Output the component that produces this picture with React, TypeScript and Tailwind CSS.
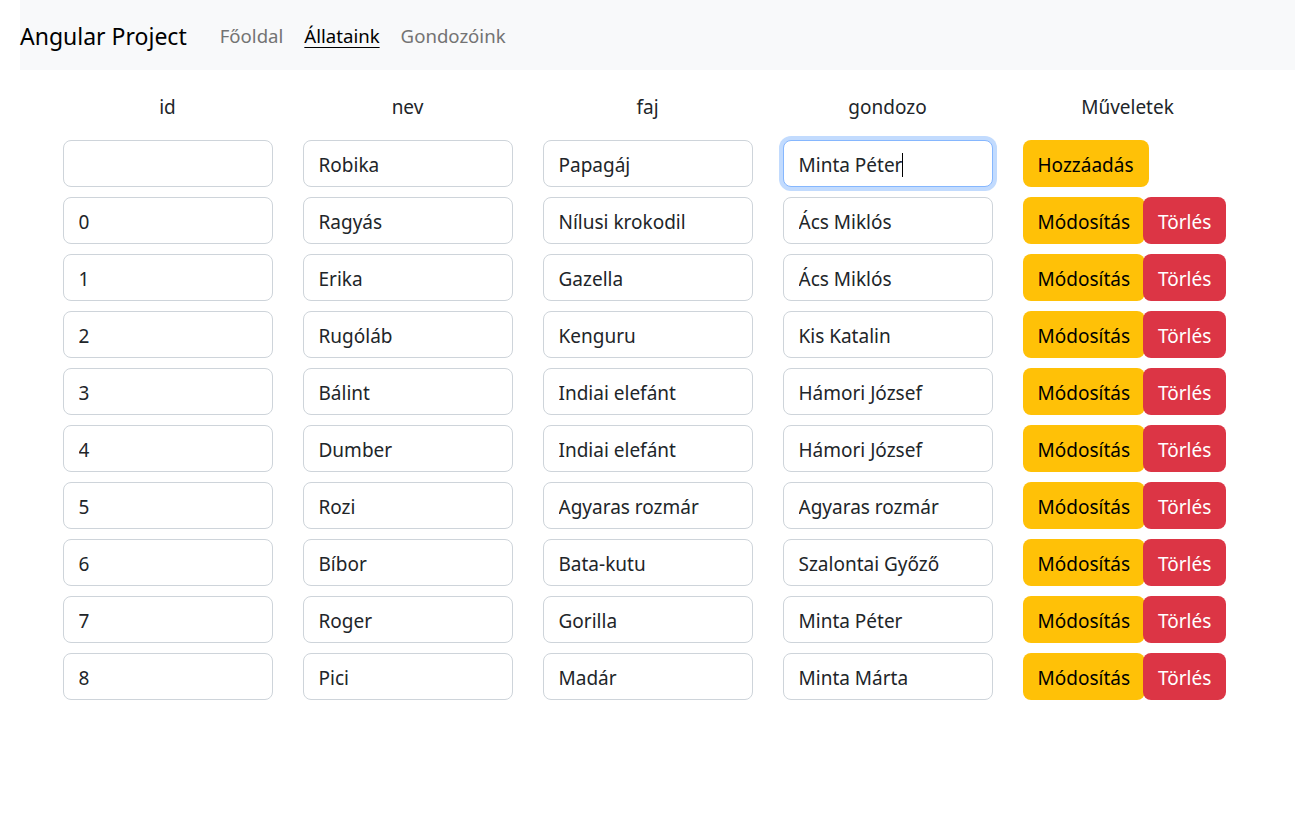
import React from 'react';

type Animal = { id: string; nev: string; faj: string; gondozo: string };

const animals: Animal[] = [
  { id: '0', nev: 'Ragyás', faj: 'Nílusi krokodil', gondozo: 'Ács Miklós' },
  { id: '1', nev: 'Erika', faj: 'Gazella', gondozo: 'Ács Miklós' },
  { id: '2', nev: 'Rugóláb', faj: 'Kenguru', gondozo: 'Kis Katalin' },
  { id: '3', nev: 'Bálint', faj: 'Indiai elefánt', gondozo: 'Hámori József' },
  { id: '4', nev: 'Dumber', faj: 'Indiai elefánt', gondozo: 'Hámori József' },
  { id: '5', nev: 'Rozi', faj: 'Agyaras rozmár', gondozo: 'Agyaras rozmár' },
  { id: '6', nev: 'Bíbor', faj: 'Bata-kutu', gondozo: 'Szalontai Győző' },
  { id: '7', nev: 'Roger', faj: 'Gorilla', gondozo: 'Minta Péter' },
  { id: '8', nev: 'Pici', faj: 'Madár', gondozo: 'Minta Márta' },
];

const inputCls =
  'w-full h-[47px] px-[15px] pt-[3px] rounded-[8px] border border-[#ced4da] bg-white text-[19px] text-[#212529] outline-none';

const btnCls = 'h-[47px] px-[15px] pt-[3px] rounded-[8px] text-[19px]';

const Field = ({ value }: { value: string }) => (
  <div className="px-[15px]">
    <input readOnly value={value} className={inputCls} />
  </div>
);

export default function App() {
  return (
    <div className="min-h-screen bg-white font-['Segoe_UI','Noto_Sans',sans-serif] text-[#212529]">
      {/* Navbar */}
      <nav className="ml-[20px] h-[70px] pt-[2px] bg-[#f8f9fa] flex items-center">
        <span className="text-[23px] text-black leading-none mr-[33px]">Angular Project</span>
        <div className="flex items-center gap-[21px] text-[18.6px] leading-none">
          <a className="text-[#737373]">Főoldal</a>
          <a className="text-black underline underline-offset-[4px]">Állataink</a>
          <a className="text-[#737373]">Gondozóink</a>
        </div>
      </nav>

      {/* Table */}
      <div className="w-[1200px] mx-auto pt-[12px]">
        <div className="grid grid-cols-5 h-[50px] mb-[8px] text-[19px]">
          {['id', 'nev', 'faj', 'gondozo', 'Műveletek'].map((h) => (
            <div key={h} className="flex items-center justify-center">
              {h}
            </div>
          ))}
        </div>

        <div className="flex flex-col gap-[10px]">
          {/* New row */}
          <div className="grid grid-cols-5">
            <Field value="" />
            <Field value="Robika" />
            <Field value="Papagáj" />
            <div className="px-[15px]">
              <div className="w-full h-[47px] px-[15px] pt-[3px] rounded-[8px] border border-[#86b7fe] shadow-[0_0_0_4px_rgba(13,110,253,0.25)] bg-white text-[19px] text-[#212529] flex items-center">
                Minta Péter
                <span className="inline-block w-px h-[24px] bg-black" />
              </div>
            </div>
            <div className="px-[15px] flex">
              <button className={`${btnCls} bg-[#ffc107] text-black`}>Hozzáadás</button>
            </div>
          </div>

          {animals.map((a) => (
            <div key={a.id} className="grid grid-cols-5">
              <Field value={a.id} />
              <Field value={a.nev} />
              <Field value={a.faj} />
              <Field value={a.gondozo} />
              <div className="px-[15px] flex">
                <button className={`${btnCls} bg-[#ffc107] text-black`}>Módosítás</button>
                <button className={`${btnCls} -ml-[2px] bg-[#dc3545] text-white`}>Törlés</button>
              </div>
            </div>
          ))}
        </div>
      </div>
    </div>
  );
}
